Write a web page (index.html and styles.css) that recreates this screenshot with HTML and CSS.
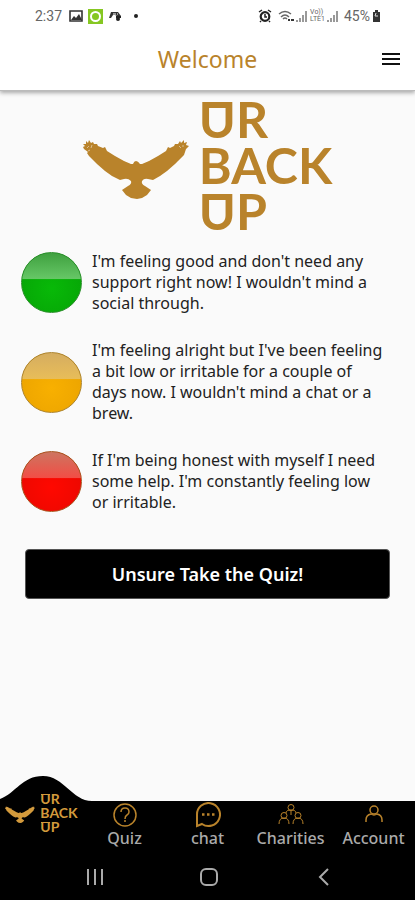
FILE: index.html
```html
<!DOCTYPE html>
<html lang="en">
<head>
<meta charset="utf-8">
<meta name="viewport" content="width=device-width, initial-scale=1">
<title>Welcome</title>
<link rel="stylesheet" href="styles.css">
</head>
<body>
<svg class="defs" width="0" height="0" aria-hidden="true">
  <symbol id="eagle" viewBox="0 0 106 60">
    <path d="M0 8L2 7 0 5 3 5 3 2 5 4 6 1 8 4 10 3 11 5 14 5 15 7 20 9 22 8 24 12 32 17 41 22 48 25 50 25Q51 22 53 22T57 25L59 25 66 22 75 17 83 12 85 8 87 9 91 7 92 5 95 5 97 2 98 4 101 1 101 4 104 3 103 6 106 7 103 10 101 16 92 25 84 32 77 37 70 41 65 40Q61 39 59 42 58 45 62 47L68 51 64 56 59 59 54 60 48 59 43 56 39 51 45 47Q49 45 48 42 45 39 41 40L37 41 29 37 22 32 14 25 6 17 4 14 5 13 1 10z"/>
    <path d="M4 9l2-2M8 9l1-3M98 9l-2-2M101 7l-2 0M5 12l2-1" stroke="#fafafa" stroke-width=".7" opacity=".7"/>
  </symbol>
</svg>
<div class="screen">
  <header class="top">
    <div class="status">
      <div class="status-side">
        <span class="clock">2:37</span>
        <svg width="14" height="14" viewBox="0 0 14 14"><path d="M1 2h12v10H1z" fill="none" stroke="#333" stroke-width="1.6"/><path d="M2 11l3-4 2 2 3-4 3 6z" fill="#333"/></svg>
        <svg width="15" height="15" viewBox="0 0 15 15"><path d="M0 0h15v15H0z" fill="#86c722"/><circle cx="7.500" cy="7.500" r="4.500" fill="none" stroke="#fff" stroke-width="2"/></svg>
        <svg width="14" height="14" viewBox="0 0 14 14"><path d="M1 9l2-6h7l3 4H9L7 6H5L3 9z" fill="#333"/><path d="M5 5h3M9 5h1" stroke="#fff"/><circle cx="10" cy="10" r="2" fill="#222"/><path d="M8 8h5" stroke="#222" stroke-width="2"/></svg>
        <span class="dot"></span>
      </div>
      <div class="status-side status-right">
        <svg width="14" height="14" viewBox="0 0 14 14"><circle cx="7" cy="7.500" r="4.300" fill="none" stroke="#222" stroke-width="2.200"/><path d="M1 3l3-2M13 3l-3-2M3 12l-1 1M11 12l1 1M7 5v3h2" fill="none" stroke="#222" stroke-width="1.500"/></svg>
        <svg width="16" height="14" viewBox="0 0 16 14"><path d="M1 5q6-5 12 0M3 8q4-4 8 0M5 10q2-2 4 0" fill="none" stroke="#666" stroke-width="1.500"/><path d="M10 11h2M13 11h3" stroke="#333" stroke-width="2"/></svg>
        <svg width="12" height="14" viewBox="0 0 12 14"><path d="M1 13v-2M4 13V9M7 13V6M10 13V2" stroke="#888" stroke-width="1.700"/></svg>
        <span class="volte">Vo))<br>LTE1</span>
        <svg width="12" height="14" viewBox="0 0 12 14"><path d="M1 13v-2M4 13V9M7 13V6M10 13V2" stroke="#888" stroke-width="1.700"/></svg>
        <span class="battery-level">45%</span>
        <svg width="9" height="14" viewBox="0 0 9 14"><path d="M3 1h3v2h2v10H1V3h2z" fill="#333"/><path d="M4 4L3 7h3" fill="none" stroke="#ddd"/></svg>
      </div>
    </div>
    <div class="appbar">
      <h1>Welcome</h1>
      <button class="menu" aria-label="Menu"><svg width="18" height="14" viewBox="0 0 18 14"><path d="M0 2h18M0 7h18M0 12h18" stroke="#111" stroke-width="2"/></svg></button>
    </div>
  </header>

  <main>
    <div class="logo">
      <svg class="bird" width="106" height="60"><use href="#eagle"/></svg>
      <div class="wordmark"><span><i class="u">U</i>R</span><span>BACK</span><span><i class="u">U</i>P</span></div>
    </div>

    <section class="moods">
      <div class="mood">
        <button class="lamp green" aria-labelledby="good"></button>
        <p id="good">I'm feeling good and don't need any support right now! I wouldn't mind a social through.</p>
      </div>
      <div class="mood">
        <button class="lamp amber" aria-labelledby="alright"></button>
        <p id="alright">I'm feeling alright but I've been feeling a bit low or irritable for a couple of days now. I wouldn't mind a chat or a brew.</p>
      </div>
      <div class="mood">
        <button class="lamp red" aria-labelledby="low"></button>
        <p id="low">If I'm being honest with myself I need some help. I'm constantly feeling low or irritable.</p>
      </div>
    </section>

    <button class="quiz">Unsure Take the Quiz!</button>
  </main>

  <footer>
    <svg class="bump" width="92" height="26" viewBox="0 0 92 26"><path d="M0 26V23C16 17 22 0 43 0S72 25 92 25v1z"/></svg>
    <nav class="tabs">
      <a href="#" class="home" aria-label="Home">
        <svg class="bird" width="30" height="17"><use href="#eagle"/></svg>
        <div class="wordmark small"><span><i class="u">U</i>R</span><span>BACK</span><span><i class="u">U</i>P</span></div>
      </a>
      <a href="#"><svg width="26" height="26" viewBox="0 0 26 26"><circle cx="13" cy="13" r="11"/><path d="M9 10q0-4 4-4t4 4q0 2-2 3t-2 4M13 18v2"/></svg>Quiz</a>
      <a href="#"><svg class="bold" width="26" height="26" viewBox="0 0 26 26"><path d="M2 24V13A11.500 11.500 0 1 1 7 22L2 24z"/><path d="M7 12.500h2.500M12 12.500h2.500M17 12.500h2.500" stroke-width="2.500"/></svg>chat</a>
      <a href="#"><svg class="thin" width="26" height="26" viewBox="0 0 26 26"><circle cx="13" cy="5.500" r="3"/><circle cx="6" cy="13.500" r="3"/><circle cx="20" cy="13.500" r="3"/><path d="M8 11q0-3 5-3t5 3M1 22q0-6 5-6t5 6M15 22q0-6 5-6t5 6M13 9v4"/></svg>Charities</a>
      <a href="#"><svg width="26" height="26" viewBox="0 0 26 26"><circle cx="13" cy="8" r="4"/><path d="M5 20v-2q0-5 5-6 3 2 6 0 5 1 5 6v2"/></svg>Account</a>
    </nav>
    <div class="system">
      <button aria-label="Recent apps"><svg width="20" height="20" viewBox="0 0 20 20"><path d="M3 2v16M10 2v16M17 2v16"/></svg></button>
      <button aria-label="Home screen"><svg width="20" height="20" viewBox="0 0 20 20"><rect x="2" y="2" width="16" height="16" rx="5"/></svg></button>
      <button aria-label="Back"><svg width="20" height="20" viewBox="0 0 20 20"><path d="M14 2L6 10l8 8"/></svg></button>
    </div>
  </footer>
</div>
</body>
</html>
```
FILE: styles.css
```css
* { box-sizing: border-box; }
body {
  margin: 0;
  background: #fafafa;
  color: #222;
  font-family: "Noto Sans", sans-serif;
}
button { border: 0; padding: 0; background: none; font: inherit; }
svg { display: block; flex: none; }
.defs { position: absolute; }
.screen { min-height: 100vh; display: flex; flex-direction: column; }

.top { background: #fff; border-bottom: 1px solid #bbb; box-shadow: 0 2px 4px #aaa; }
.status {
  height: 32px;
  padding: 0 34px 0 35px;
  display: flex;
  align-items: center;
  justify-content: space-between;
  font: 14px Roboto, sans-serif;
  color: #666;
}
.status-side { display: flex; align-items: center; gap: 5px; }
.clock { margin-right: 2px; }
.status-right { gap: 2px; }
.status-right > :first-child { margin-right: 4px; }
.dot { width: 4px; height: 4px; margin-left: 7px; border-radius: 50%; background: #222; }
.volte { font-size: 7px; line-height: 7px; }
.battery-level { margin-left: 3px; }

.appbar {
  height: 58px;
  padding: 0 15px 4px;
  display: grid;
  grid-template-columns: 1fr auto 1fr;
  align-items: center;
}
h1 { grid-column: 2; margin: 0; font-size: 23px; font-weight: 400; color: #b9832b; }
.menu { justify-self: end; }

main { flex: 1; padding: 5px 25px 24px; }
.logo { display: flex; justify-content: center; align-items: center; gap: 10px; }
.bird { fill: #b9832b; }
.logo .bird { margin-top: 8px; }
.wordmark {
  display: flex;
  flex-direction: column;
  color: #b9832b;
  font: 700 50px/46px Lato, sans-serif;
}
.u { position: relative; font-style: normal; }
.u::before {
  content: "";
  position: absolute;
  top: 22%;
  left: 10%;
  right: 10%;
  height: 10%;
  background: currentColor;
}

.moods { margin-top: 17px; display: flex; flex-direction: column; gap: 26px; }
.mood { display: flex; align-items: center; gap: 10px; margin-left: -4px; padding-right: 4px; }
.mood p { margin: 0; font-size: 16px; line-height: 21px; }
.lamp {
  flex: none;
  width: 61px;
  height: 61px;
  border-radius: 50%;
  border: 1px solid;
}
.green { border-color: #2b8f2b; background: linear-gradient(#3fa03f, #66c766 44%, transparent 45%), radial-gradient(circle at 50% 60%, #08b908, #06a706 70%); }
.amber { border-color: #ad842e; background: linear-gradient(#d5ad60, #e8bd59 44%, transparent 45%), radial-gradient(circle at 50% 60%, #f8b000, #eda500 70%); }
.red { border-color: #a95520; background: linear-gradient(#cd7560, #f24d45 44%, transparent 45%), radial-gradient(circle at 50% 60%, #ff0800, #ed0800 70%); }

.quiz {
  display: block;
  width: 100%;
  height: 50px;
  margin-top: 36px;
  border: 1px solid #555;
  border-radius: 4px;
  background: #000;
  color: #fff;
  font-size: 18px;
  font-weight: 600;
}

footer { position: relative; background: #000; }
.bump { position: absolute; left: 0; bottom: 100%; margin-bottom: -1px; }
.tabs { height: 52px; display: grid; grid-template-columns: repeat(5, 1fr); }
.tabs a {
  position: relative;
  display: flex;
  flex-direction: column;
  align-items: center;
  padding-top: 1px;
  color: #aaa;
  font-size: 16px;
  font-weight: 500;
  line-height: 20px;
  text-decoration: none;
}
.tabs svg { fill: none; stroke: #b9832b; stroke-width: 1.5; }
.tabs .bold { stroke-width: 2; }
.tabs .thin { stroke-width: 1; }
.tabs .home { flex-direction: row; align-items: flex-start; justify-content: center; gap: 5px; padding: 0; }
.tabs .home .bird { fill: #d39a3c; stroke: none; margin-top: 5px; }
.tabs .small { margin-top: -9px; color: #d39a3c; font: 700 14px/14px Lato, sans-serif; }
.system { height: 47px; padding: 0 34px 0 38px; display: grid; grid-template-columns: repeat(3, 1fr); align-items: center; justify-items: center; }
.system svg { fill: none; stroke: #aaa; stroke-width: 2; }
```
